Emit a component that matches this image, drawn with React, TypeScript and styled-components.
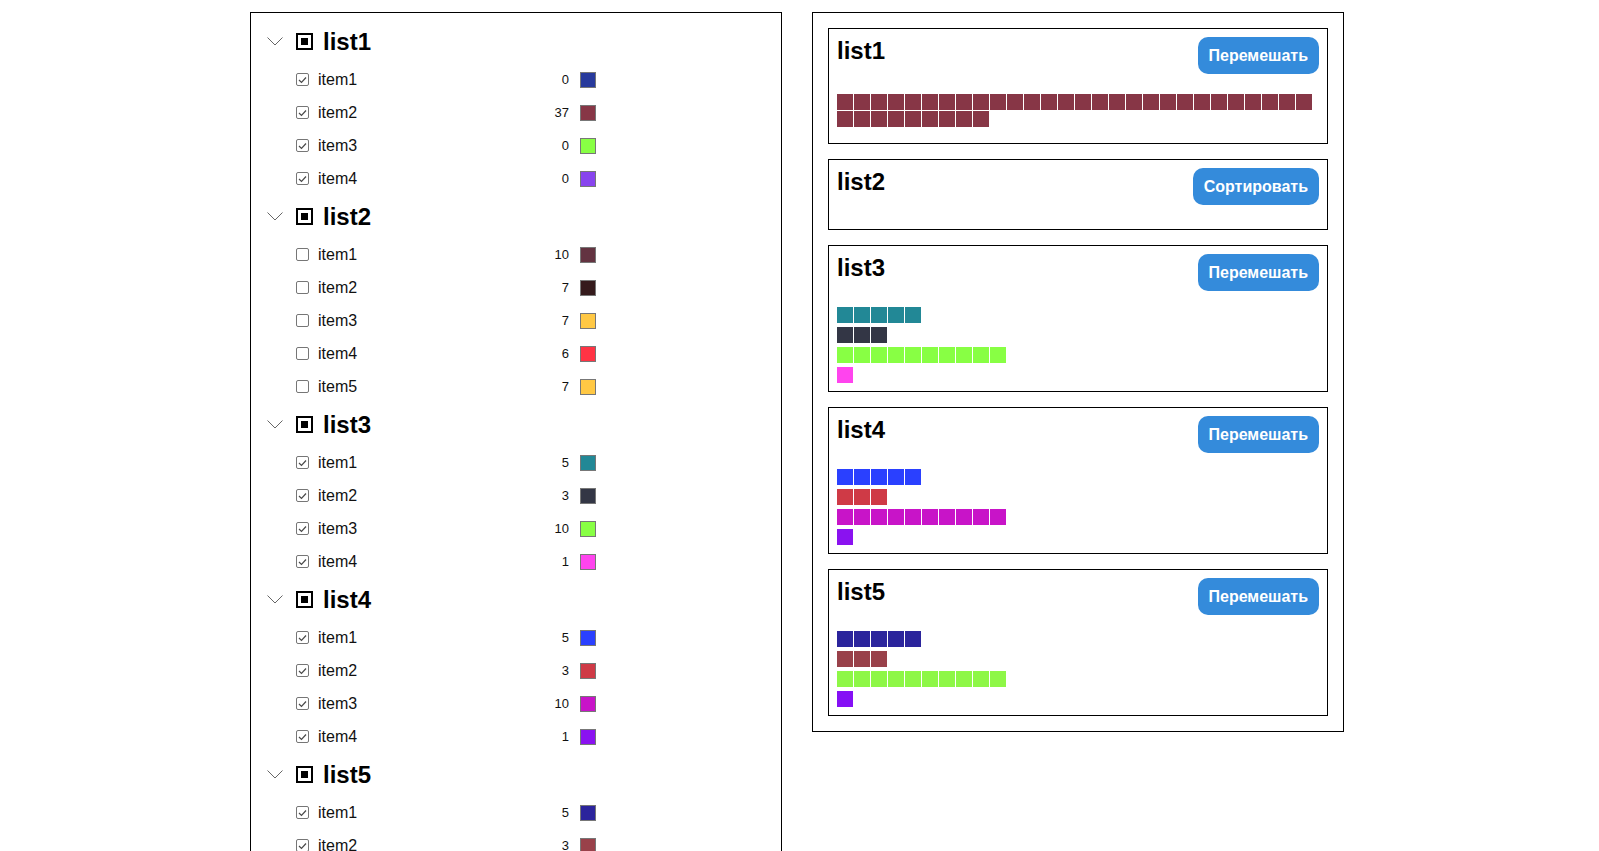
import React from "react";
import styled, { createGlobalStyle } from "styled-components";

const GlobalStyle = createGlobalStyle`
  html { scrollbar-width: none; }
  html::-webkit-scrollbar { display: none; }
  body {
    margin: 0;
    background: #fff;
    color: #000;
    font-family: "Liberation Sans", Arial, sans-serif;
  }
`;

type Item = { name: string; count: number; color: string; checked: boolean };
type List = { name: string; action: string; items: Item[] };

const lists: List[] = [
  {
    name: "list1",
    action: "Перемешать",
    items: [
      { name: "item1", count: 0, color: "#283a9c", checked: true },
      { name: "item2", count: 37, color: "#873646", checked: true },
      { name: "item3", count: 0, color: "#88ff44", checked: true },
      { name: "item4", count: 0, color: "#8844ee", checked: true },
    ],
  },
  {
    name: "list2",
    action: "Сортировать",
    items: [
      { name: "item1", count: 10, color: "#633341", checked: false },
      { name: "item2", count: 7, color: "#351a1c", checked: false },
      { name: "item3", count: 7, color: "#ffc844", checked: false },
      { name: "item4", count: 6, color: "#ff3344", checked: false },
      { name: "item5", count: 7, color: "#ffc844", checked: false },
    ],
  },
  {
    name: "list3",
    action: "Перемешать",
    items: [
      { name: "item1", count: 5, color: "#228896", checked: true },
      { name: "item2", count: 3, color: "#333645", checked: true },
      { name: "item3", count: 10, color: "#88ff44", checked: true },
      { name: "item4", count: 1, color: "#ff44ee", checked: true },
    ],
  },
  {
    name: "list4",
    action: "Перемешать",
    items: [
      { name: "item1", count: 5, color: "#2a40ff", checked: true },
      { name: "item2", count: 3, color: "#cf3a46", checked: true },
      { name: "item3", count: 10, color: "#c814c8", checked: true },
      { name: "item4", count: 1, color: "#8a12f0", checked: true },
    ],
  },
  {
    name: "list5",
    action: "Перемешать",
    items: [
      { name: "item1", count: 5, color: "#2b249c", checked: true },
      { name: "item2", count: 3, color: "#99414a", checked: true },
      { name: "item3", count: 10, color: "#8ef747", checked: true },
      { name: "item4", count: 1, color: "#8510f5", checked: true },
    ],
  },
];

const Page = styled.div`
  width: 1099px;
  margin: 0 auto;
  padding-top: 12px;
  display: flex;
  align-items: flex-start;
  gap: 30px;
`;

const TreePanel = styled.div`
  width: 532px;
  box-sizing: border-box;
  border: 1px solid #000;
  padding: 7px 16px 20px;
`;

const Group = styled.div`
  display: flex;
  flex-direction: column;
`;

const GroupHeader = styled.div`
  height: 43px;
  display: flex;
  align-items: center;
`;

const Chevron = styled.svg`
  width: 16px;
  height: 9px;
  margin-right: 13px;
  flex: none;
`;

const GroupBox = styled.span`
  width: 17px;
  height: 17px;
  box-sizing: border-box;
  border: 2px solid #000;
  display: flex;
  align-items: center;
  justify-content: center;
  margin-right: 10px;
  flex: none;
  &::after {
    content: "";
    width: 7px;
    height: 7px;
    background: #000;
  }
`;

const GroupTitle = styled.span`
  font-size: 24px;
  font-weight: bold;
`;

const ItemRow = styled.div`
  width: 300px;
  height: 33px;
  margin-left: 29px;
  display: flex;
  align-items: center;
`;

const CheckBox = styled.span`
  width: 13px;
  height: 13px;
  box-sizing: border-box;
  border: 1px solid #767676;
  border-radius: 2px;
  background: #fff;
  margin-right: 9px;
  flex: none;
  display: flex;
  align-items: center;
  justify-content: center;
`;

const ItemLabel = styled.span`
  flex: 1;
  font-size: 16px;
  color: #111;
`;

const ItemCount = styled.span`
  font-size: 13px;
  color: #111;
  margin-right: 11px;
`;

const Swatch = styled.span<{ $color: string }>`
  width: 16px;
  height: 16px;
  box-sizing: border-box;
  border: 1px solid #777;
  background: ${(p) => p.$color};
  flex: none;
`;

const BoardPanel = styled.div`
  width: 532px;
  box-sizing: border-box;
  border: 1px solid #000;
  padding: 15px;
  display: flex;
  flex-direction: column;
  gap: 15px;
`;

const Card = styled.div`
  border: 1px solid #000;
  padding: 8px;
`;

const CardHeader = styled.div`
  display: flex;
  justify-content: space-between;
  align-items: flex-start;
`;

const CardTitle = styled.h2`
  margin: 0;
  font-size: 24px;
  font-weight: bold;
`;

const ActionButton = styled.button`
  height: 37px;
  padding: 0 11px;
  border: none;
  border-radius: 10px;
  background: #348bdb;
  color: #fff;
  font-family: "Liberation Sans", Arial, sans-serif;
  font-size: 16px;
  font-weight: bold;
  cursor: pointer;
`;

const Bars = styled.div`
  margin-top: 12px;
  min-height: 4px;
  display: flex;
  flex-direction: column;
`;

const BarRow = styled.div`
  margin-top: 4px;
  display: flex;
  flex-wrap: wrap;
  gap: 1px;
`;

const Cell = styled.span<{ $color: string }>`
  width: 16px;
  height: 16px;
  background: ${(p) => p.$color};
`;

const CheckMark = () => (
  <svg width="9" height="8" viewBox="0 0 9 8">
    <polyline points="1,4 3.5,6.5 8,1.5" fill="none" stroke="#4a4a4a" strokeWidth="1.2" />
  </svg>
);

export default function App() {
  return (
    <>
      <GlobalStyle />
      <Page>
        <TreePanel>
          {lists.map((list) => (
            <Group key={list.name}>
              <GroupHeader>
                <Chevron viewBox="0 0 16 9">
                  <polyline points="0.5,0.5 8,8 15.5,0.5" fill="none" stroke="#666" strokeWidth="1" />
                </Chevron>
                <GroupBox />
                <GroupTitle>{list.name}</GroupTitle>
              </GroupHeader>
              {list.items.map((item) => (
                <ItemRow key={item.name}>
                  <CheckBox>{item.checked && <CheckMark />}</CheckBox>
                  <ItemLabel>{item.name}</ItemLabel>
                  <ItemCount>{item.count}</ItemCount>
                  <Swatch $color={item.color} />
                </ItemRow>
              ))}
            </Group>
          ))}
        </TreePanel>
        <BoardPanel>
          {lists.map((list) => (
            <Card key={list.name}>
              <CardHeader>
                <CardTitle>{list.name}</CardTitle>
                <ActionButton>{list.action}</ActionButton>
              </CardHeader>
              <Bars>
                {list.items
                  .filter((i) => i.checked)
                  .map((item) => (
                    <BarRow key={item.name}>
                      {Array.from({ length: item.count }).map((_, k) => (
                        <Cell key={k} $color={item.color} />
                      ))}
                    </BarRow>
                  ))}
              </Bars>
            </Card>
          ))}
        </BoardPanel>
      </Page>
    </>
  );
}
